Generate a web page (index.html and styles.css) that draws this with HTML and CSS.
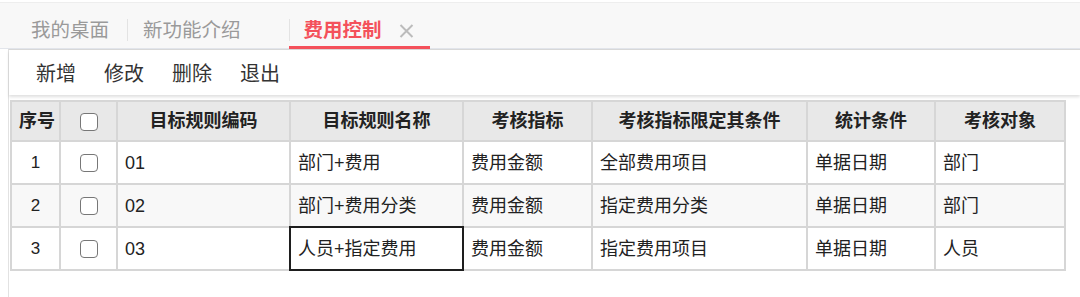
FILE: index.html
```html
<!DOCTYPE html>
<html lang="zh-CN">
<head>
    <meta charset="UTF-8">
    <title>费用控制</title>
    <link rel="stylesheet" href="styles.css">
</head>
<body>
    <header class="tabbar">
        <div class="tab first">我的桌面</div>
        <span class="tab-sep"></span>
        <div class="tab">新功能介绍<span class="close hidden"></span></div>
        <span class="tab-sep"></span>
        <div class="tab active">费用控制<span class="close">
            <svg width="15" height="14" viewBox="0 0 15 14"><path d="M1.5 1L13.5 13M13.5 1L1.5 13" stroke="#bcbcbc" stroke-width="2" fill="none"/></svg>
        </span></div>
    </header>

    <div class="main">
        <div class="toolbar">
            <span class="tool">新增</span>
            <span class="tool">修改</span>
            <span class="tool">删除</span>
            <span class="tool">退出</span>
        </div>

        <table class="grid">
            <colgroup>
                <col style="width: 49px">
                <col style="width: 57px">
                <col style="width: 173px">
                <col style="width: 173px">
                <col style="width: 129px">
                <col style="width: 215px">
                <col style="width: 128px">
                <col style="width: 130px">
            </colgroup>
            <thead>
                <tr>
                    <th>序号</th>
                    <th><span class="check"></span></th>
                    <th>目标规则编码</th>
                    <th>目标规则名称</th>
                    <th>考核指标</th>
                    <th>考核指标限定其条件</th>
                    <th>统计条件</th>
                    <th>考核对象</th>
                </tr>
            </thead>
            <tbody>
                <tr>
                    <td class="num">1</td>
                    <td class="num"><span class="check"></span></td>
                    <td>01</td>
                    <td>部门+费用</td>
                    <td>费用金额</td>
                    <td>全部费用项目</td>
                    <td>单据日期</td>
                    <td>部门</td>
                </tr>
                <tr class="alt">
                    <td class="num">2</td>
                    <td class="num"><span class="check"></span></td>
                    <td>02</td>
                    <td>部门+费用分类</td>
                    <td>费用金额</td>
                    <td>指定费用分类</td>
                    <td>单据日期</td>
                    <td>部门</td>
                </tr>
                <tr>
                    <td class="num">3</td>
                    <td class="num"><span class="check"></span></td>
                    <td>03</td>
                    <td class="selected">人员+指定费用</td>
                    <td>费用金额</td>
                    <td>指定费用项目</td>
                    <td>单据日期</td>
                    <td>人员</td>
                </tr>
            </tbody>
        </table>
    </div>
</body>
</html>
```

FILE: styles.css
```css
:root {
    --red: #f4515b;
    --line: #d6d6d6;
    --text: #222;
}

body {
    margin: 0;
    background: #fff;
    font-family: "Liberation Sans", "Noto Sans CJK SC", sans-serif;
    color: var(--text);
}

.tabbar {
    margin-top: 2px;
    height: 47px;
    box-sizing: border-box;
    border-top: 1px solid #eeeeee;
    border-bottom: 1px solid #e2e5eb;
    background: #f8f8f8;
    display: flex;
    align-items: flex-start;
    padding-left: 16px;
}

.tab {
    height: 46px;
    box-sizing: border-box;
    padding: 14px 16px 0 15px;
    font-size: 19.5px;
    line-height: 27px;
    color: #9a9a9a;
    white-space: nowrap;
    display: flex;
    align-items: flex-start;
}

.tab.first {
    padding-right: 18px;
}

.tab.active {
    color: var(--red);
    font-weight: bold;
    border-bottom: 3px solid var(--red);
    margin-left: -1px;
    padding-left: 15px;
}

.tab-sep {
    width: 1px;
    height: 22px;
    margin-top: 16px;
    background: #e3e3e3;
}

.close {
    display: flex;
    width: 15px;
    height: 27px;
    align-items: center;
    margin-left: 17px;
}

.close.hidden {
    visibility: hidden;
}

.main {
    margin-left: 8px;
    border-left: 1px solid #e2e2e2;
    border-top: 1px solid #d9d9d9;
    min-height: 260px;
}

.toolbar {
    height: 45px;
    display: flex;
    align-items: center;
    gap: 28px;
    padding-left: 27px;
    font-size: 20px;
    color: #333;
    background: #fff;
    box-shadow: 0 2px 3px rgba(0, 0, 0, 0.13);
}

.grid {
    margin: 5px 0 0 1px;
    width: 1054px;
    table-layout: fixed;
    border-collapse: collapse;
    font-size: 18px;
    line-height: 24px;
}

.grid th,
.grid td {
    border: 2px solid var(--line);
    padding: 0 7px;
    white-space: nowrap;
    overflow: hidden;
}

.grid th {
    height: 38px;
    background: #e8e8e8;
    font-weight: bold;
    text-align: center;
}

.grid td {
    height: 41px;
    text-align: left;
}

.grid td.num {
    text-align: center;
    padding: 0;
    font-size: 17px;
}

.grid tr.alt td {
    background: #f8f8f8;
}

.grid td.selected {
    outline: 2px solid #1e1e1e;
    outline-offset: -1px;
}

.check {
    display: inline-block;
    width: 16px;
    height: 16px;
    border: 1.5px solid #777;
    border-radius: 4px;
    background: #fff;
    vertical-align: middle;
}
```
